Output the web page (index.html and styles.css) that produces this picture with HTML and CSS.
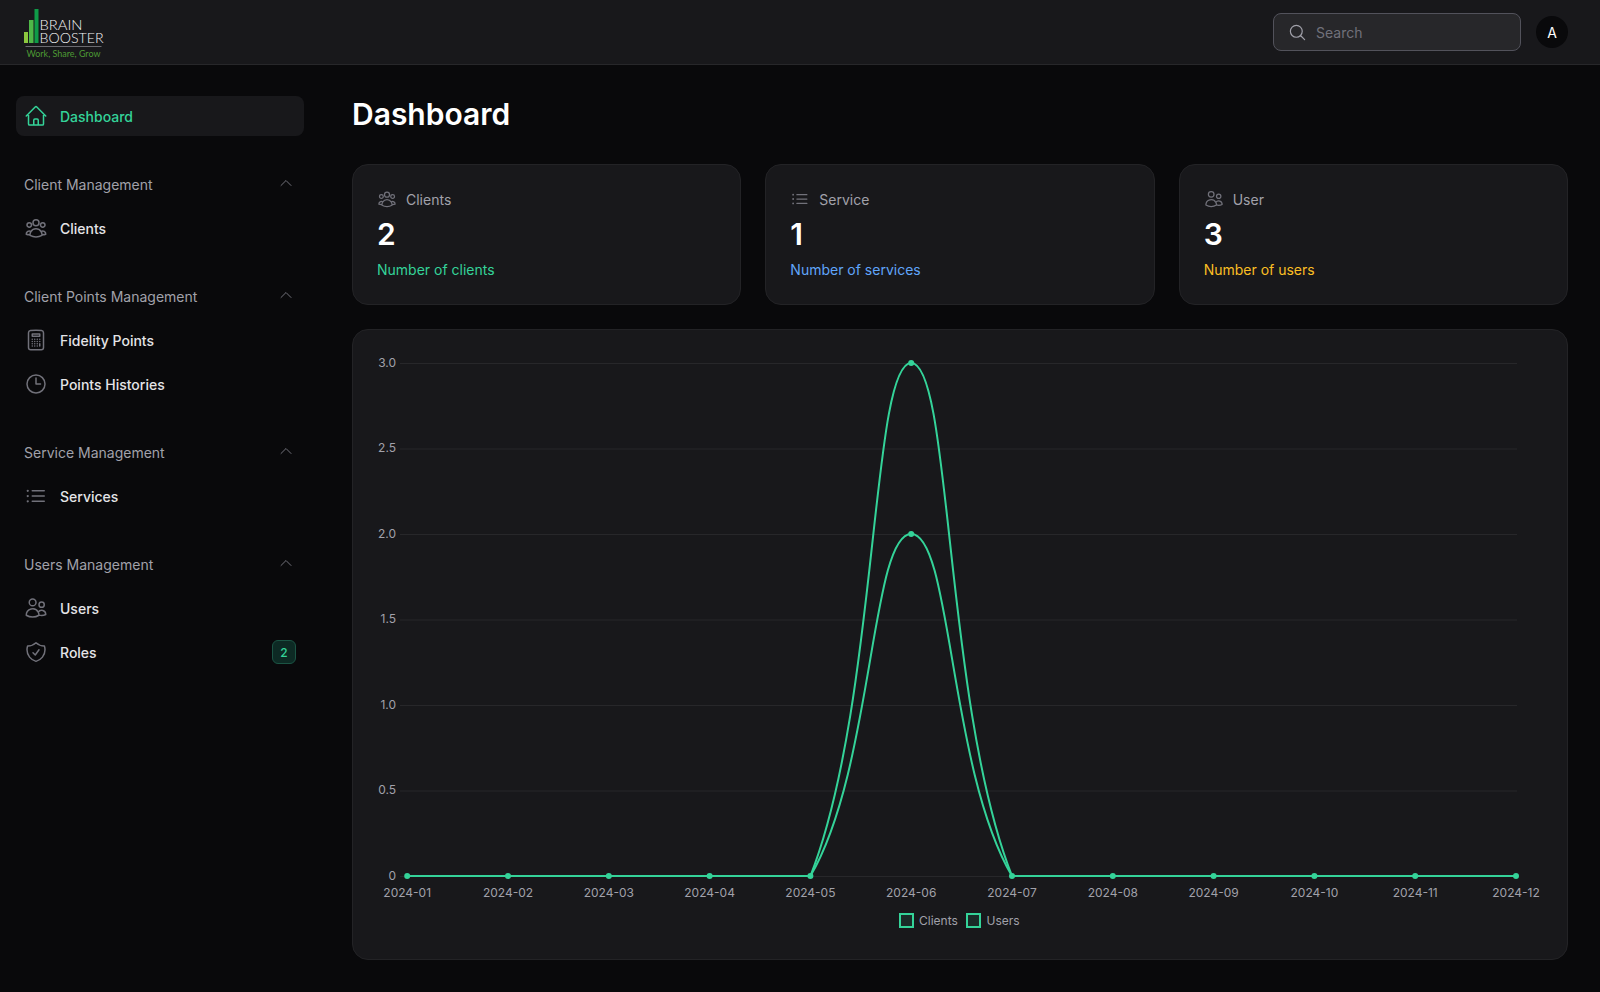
FILE: index.html
```html
<!DOCTYPE html>
<html lang="en">

<head>
	<meta charset="UTF-8" />
	<title>Dashboard</title>
	<link rel="stylesheet" href="styles.css">
</head>

<body>
	<!-- icon set -->
	<svg class="icon-defs">
		<symbol id="i-home" viewBox="0 0 24 24"><path d="m2.25 12 8.954-8.955c.44-.439 1.152-.439 1.591 0L21.75 12M4.5 9.75v10.125c0 .621.504 1.125 1.125 1.125H9.75v-4.875c0-.621.504-1.125 1.125-1.125h2.25c.621 0 1.125.504 1.125 1.125V21h4.125c.621 0 1.125-.504 1.125-1.125V9.75M8.25 21h8.25"/></symbol>
		<symbol id="i-group" viewBox="0 0 24 24"><path d="M18 18.72a9.094 9.094 0 0 0 3.741-.479 3 3 0 0 0-4.682-2.72m.94 3.198.001.031c0 .225-.012.447-.037.666A11.944 11.944 0 0 1 12 21c-2.17 0-4.207-.576-5.963-1.584A6.062 6.062 0 0 1 6 18.719m12 0a5.971 5.971 0 0 0-.941-3.197m0 0A5.995 5.995 0 0 0 12 12.75a5.995 5.995 0 0 0-5.058 2.772m0 0a3 3 0 0 0-4.681 2.72 8.986 8.986 0 0 0 3.74.477m.94-3.197a5.971 5.971 0 0 0-.94 3.197M15 6.75a3 3 0 1 1-6 0 3 3 0 0 1 6 0Zm6 2.25a2.25 2.25 0 1 1-4.5 0 2.25 2.25 0 0 1 4.5 0Zm-13.5 0a2.25 2.25 0 1 1-4.5 0 2.25 2.25 0 0 1 4.5 0Z"/></symbol>
		<symbol id="i-calc" viewBox="0 0 24 24"><path d="M15.75 15.75V18m-7.5-6.75h.008v.008H8.25v-.008Zm0 2.25h.008v.008H8.25V13.5Zm0 2.25h.008v.008H8.25v-.008Zm0 2.25h.008v.008H8.25V18Zm2.498-6.75h.007v.008h-.007v-.008Zm0 2.25h.007v.008h-.007V13.5Zm0 2.25h.007v.008h-.007v-.008Zm0 2.25h.007v.008h-.007V18Zm2.504-6.75h.008v.008h-.008v-.008Zm0 2.25h.008v.008h-.008V13.5Zm0 2.25h.008v.008h-.008v-.008Zm0 2.25h.008v.008h-.008V18Zm2.498-6.75h.008v.008h-.008v-.008Zm0 2.25h.008v.008h-.008V13.5ZM8.25 6h7.5v2.25h-7.5V6ZM12 2.25c-1.892 0-3.758.11-5.593.322C5.307 2.7 4.5 3.65 4.5 4.757V19.5a2.25 2.25 0 0 0 2.25 2.25h10.5a2.25 2.25 0 0 0 2.25-2.25V4.757c0-1.108-.806-2.057-1.907-2.185A48.507 48.507 0 0 0 12 2.25Z"/></symbol>
		<symbol id="i-clock" viewBox="0 0 24 24"><path d="M12 6v6h4.5m4.5 0a9 9 0 1 1-18 0 9 9 0 0 1 18 0Z"/></symbol>
		<symbol id="i-list" viewBox="0 0 24 24"><path d="M8.25 6.75h12M8.25 12h12m-12 5.25h12M3.75 6.75h.007v.008H3.75V6.75Zm.375 0a.375.375 0 1 1-.75 0 .375.375 0 0 1 .75 0ZM3.75 12h.007v.008H3.75V12Zm.375 0a.375.375 0 1 1-.75 0 .375.375 0 0 1 .75 0Zm-.375 5.25h.007v.008H3.75v-.008Zm.375 0a.375.375 0 1 1-.75 0 .375.375 0 0 1 .75 0Z"/></symbol>
		<symbol id="i-users" viewBox="0 0 24 24"><path d="M15 19.128a9.38 9.38 0 0 0 2.625.372 9.337 9.337 0 0 0 4.121-.952 4.125 4.125 0 0 0-7.533-2.493M15 19.128v-.003c0-1.113-.285-2.16-.786-3.07M15 19.128v.106A12.318 12.318 0 0 1 8.624 21c-2.331 0-4.512-.645-6.374-1.766l-.001-.109a6.375 6.375 0 0 1 11.964-3.07M12 6.375a3.375 3.375 0 1 1-6.75 0 3.375 3.375 0 0 1 6.75 0Zm8.25 2.25a2.625 2.625 0 1 1-5.25 0 2.625 2.625 0 0 1 5.25 0Z"/></symbol>
		<symbol id="i-shield" viewBox="0 0 24 24"><path d="M9 12.75 11.25 15 15 9.75m-3-7.036A11.959 11.959 0 0 1 3.598 6 11.99 11.99 0 0 0 3 9.749c0 5.592 3.824 10.29 9 11.623 5.176-1.332 9-6.03 9-11.622 0-1.31-.21-2.571-.598-3.751h-.152c-3.196 0-6.1-1.248-8.25-3.285Z"/></symbol>
		<symbol id="i-chevron" viewBox="0 0 24 24"><path d="m4.5 15.75 7.5-7.5 7.5 7.5"/></symbol>
		<symbol id="i-search" viewBox="0 0 24 24"><path d="m21 21-5.197-5.197m0 0A7.5 7.5 0 1 0 5.196 5.196a7.5 7.5 0 0 0 10.607 10.607Z"/></symbol>
	</svg>

	<header class="topbar">
		<svg class="logo" width="84" height="50" viewBox="0 0 84 50">
			<rect x="0" y="23" width="4" height="11" fill="#8cc63f"/>
			<rect x="5" y="11" width="4.5" height="23" fill="#4fb848"/>
			<rect x="10.5" y="0" width="4" height="34" fill="#0f9b48"/>
			<text class="logo-word" x="15.5" y="21" textLength="43" lengthAdjust="spacingAndGlyphs">BRAIN</text>
			<text class="logo-word" x="15.5" y="33.5" textLength="64" lengthAdjust="spacingAndGlyphs">BOOSTER</text>
			<rect x="1.5" y="37" width="76" height="1" fill="#6b6b70"/>
			<text class="logo-tag" x="2.5" y="48" textLength="74" lengthAdjust="spacingAndGlyphs">Work, Share, Grow</text>
		</svg>
		<div class="topbar-right">
			<div class="search">
				<svg class="ico search-ico"><use href="#i-search"/></svg>
				<span>Search</span>
			</div>
			<div class="avatar">A</div>
		</div>
	</header>

	<div class="layout">
		<aside class="sidebar">
			<a class="nav-item active"><svg class="ico"><use href="#i-home"/></svg>Dashboard</a>

			<div class="nav-group">
				<div class="nav-title">Client Management <svg class="ico chev"><use href="#i-chevron"/></svg></div>
				<a class="nav-item"><svg class="ico"><use href="#i-group"/></svg>Clients</a>
			</div>

			<div class="nav-group">
				<div class="nav-title">Client Points Management <svg class="ico chev"><use href="#i-chevron"/></svg></div>
				<a class="nav-item"><svg class="ico"><use href="#i-calc"/></svg>Fidelity Points</a>
				<a class="nav-item"><svg class="ico"><use href="#i-clock"/></svg>Points Histories</a>
			</div>

			<div class="nav-group">
				<div class="nav-title">Service Management <svg class="ico chev"><use href="#i-chevron"/></svg></div>
				<a class="nav-item"><svg class="ico"><use href="#i-list"/></svg>Services</a>
			</div>

			<div class="nav-group">
				<div class="nav-title">Users Management <svg class="ico chev"><use href="#i-chevron"/></svg></div>
				<a class="nav-item"><svg class="ico"><use href="#i-users"/></svg>Users</a>
				<a class="nav-item"><svg class="ico"><use href="#i-shield"/></svg>Roles<span class="badge">2</span></a>
			</div>
		</aside>

		<main class="content">
			<h1>Dashboard</h1>

			<div class="stats">
				<div class="card stat">
					<div class="stat-head"><svg class="ico"><use href="#i-group"/></svg>Clients</div>
					<div class="stat-value">2</div>
					<div class="stat-desc green">Number of clients</div>
				</div>
				<div class="card stat">
					<div class="stat-head"><svg class="ico"><use href="#i-list"/></svg>Service</div>
					<div class="stat-value">1</div>
					<div class="stat-desc blue">Number of services</div>
				</div>
				<div class="card stat">
					<div class="stat-head"><svg class="ico"><use href="#i-users"/></svg>User</div>
					<div class="stat-value">3</div>
					<div class="stat-desc yellow">Number of users</div>
				</div>
			</div>

			<div class="card chart">
				<!-- group is shifted so the numbers below are page coordinates -->
				<svg width="1214" height="630" viewBox="0 0 1214 630">
					<g transform="translate(-353 -329)">
						<g class="grid">
							<path d="M400 362.5H1517M400 448H1517M400 533.5H1517M400 619H1517M400 704.5H1517M400 790H1517M400 875.5H1517"/>
						</g>
						<g class="tick" text-anchor="end">
							<text x="396" y="366">3.0</text>
							<text x="396" y="451">2.5</text>
							<text x="396" y="537">2.0</text>
							<text x="396" y="622">1.5</text>
							<text x="396" y="708">1.0</text>
							<text x="396" y="793">0.5</text>
							<text x="396" y="879">0</text>
						</g>
						<g class="tick" text-anchor="middle">
							<text x="407.2" y="896">2024-01</text>
							<text x="508" y="896">2024-02</text>
							<text x="608.8" y="896">2024-03</text>
							<text x="709.6" y="896">2024-04</text>
							<text x="810.4" y="896">2024-05</text>
							<text x="911.2" y="896">2024-06</text>
							<text x="1012" y="896">2024-07</text>
							<text x="1112.8" y="896">2024-08</text>
							<text x="1213.6" y="896">2024-09</text>
							<text x="1314.4" y="896">2024-10</text>
							<text x="1415.2" y="896">2024-11</text>
							<text x="1516" y="896">2024-12</text>
						</g>
						<path class="line" d="M407.2 875H810.4C873.3 768.4 870.9 533 911.2 533C951.5 533 949.1 768.4 1012 875H1516"/>
						<path class="line" d="M407.2 875H810.4C878 702.9 870.9 362 911.2 362C951.5 362 944.4 702.9 1012 875H1516"/>
						<g class="dots">
							<circle cx="407.2" cy="875" r="3"/>
							<circle cx="508" cy="875" r="3"/>
							<circle cx="608.8" cy="875" r="3"/>
							<circle cx="709.6" cy="875" r="3"/>
							<circle cx="810.4" cy="875" r="3"/>
							<circle cx="911.2" cy="533" r="3"/>
							<circle cx="911.2" cy="362" r="3"/>
							<circle cx="1012" cy="875" r="3"/>
							<circle cx="1112.8" cy="875" r="3"/>
							<circle cx="1213.6" cy="875" r="3"/>
							<circle cx="1314.4" cy="875" r="3"/>
							<circle cx="1415.2" cy="875" r="3"/>
							<circle cx="1516" cy="875" r="3"/>
						</g>
						<rect class="swatch" x="900" y="913" width="13" height="13"/>
						<text class="tick" x="919" y="924">Clients</text>
						<rect class="swatch" x="967" y="913" width="13" height="13"/>
						<text class="tick" x="986.5" y="924">Users</text>
					</g>
				</svg>
			</div>
		</main>
	</div>
</body>

</html>
```

FILE: styles.css
```css
* { box-sizing: border-box; }

html, body { height: 100%; }

body {
	margin: 0;
	display: flex; flex-direction: column;
	background: #09090b; color: #e4e4e7;
	font-family: Inter, 'Liberation Sans', sans-serif;
	font-size: 14px;
	overflow: hidden;
}

.icon-defs { display: none; }

.ico {
	width: 24px; height: 24px; flex: none;
	fill: none; stroke: #71717a; stroke-width: 1.5;
	stroke-linecap: round; stroke-linejoin: round;
}

/* top bar */
.topbar {
	flex: none; height: 65px;
	display: flex; align-items: center; justify-content: space-between;
	padding: 0 32px 0 24px;
	background: #18181b;
	border-bottom: 1px solid #27272a;
}

.logo { display: block; margin-top: 3px; }
.logo-word { font-family: Lato, sans-serif; font-weight: 300; font-size: 14px; fill: #f4f4f5; }
.logo-tag { font-family: Lato, sans-serif; font-size: 9px; fill: #4d9a34; }

.topbar-right { display: flex; align-items: center; gap: 15px; }

.search {
	width: 248px; height: 38px;
	display: flex; align-items: center; gap: 9px;
	padding-left: 14px;
	background: #27272a; color: #71717a;
	border: 1px solid #52525b; border-radius: 8px;
}
.search-ico { width: 19px; height: 19px; stroke: #a1a1aa; }

.avatar {
	width: 32px; height: 32px; border-radius: 50%;
	display: flex; align-items: center; justify-content: center;
	background: #09090b; color: #fff;
}

/* sidebar */
.layout { flex: 1; display: flex; min-height: 0; }

.sidebar {
	flex: none; width: 320px;
	padding: 31px 16px 16px;
	display: flex; flex-direction: column; gap: 28px;
}

.nav-group { display: flex; flex-direction: column; gap: 4px; }

.nav-title {
	height: 40px;
	display: flex; align-items: center; justify-content: space-between;
	padding: 0 10px 0 8px;
	color: #a1a1aa;
}
.chev { width: 16px; height: 16px; margin-top: -2px; }

.nav-item {
	height: 40px;
	display: flex; align-items: center; gap: 12px;
	padding: 0 8px;
	border-radius: 8px;
	font-weight: 500;
}
.nav-item.active { background: #18181b; color: #34d399; }
.nav-item.active .ico { stroke: #34d399; }

.badge {
	margin-left: auto;
	width: 24px; height: 24px;
	display: flex; align-items: center; justify-content: center;
	border: 1px solid #1b5444; border-radius: 6px;
	background: #0d2a24; color: #34d399;
	font-size: 12px;
}

/* main */
.content {
	flex: 1; min-width: 0;
	padding: 31px 32px 32px;
	display: flex; flex-direction: column;
}

h1 { margin: 0 0 32px; font-size: 30px; line-height: 36px; font-weight: 600; color: #fff; }

.card {
	background: #18181b;
	border: 1px solid #232326;
	border-radius: 16px;
}

.stats { display: grid; grid-template-columns: repeat(3, 1fr); gap: 24px; margin-bottom: 24px; }

.stat { height: 141px; padding: 24px; }

.stat-head {
	height: 20px;
	display: flex; align-items: center; gap: 9px;
	color: #a1a1aa;
}
.stat-head .ico { width: 20px; height: 20px; }

.stat-value { margin-top: 7px; font-size: 30px; line-height: 36px; font-weight: 600; color: #fff; }
.stat-desc { margin-top: 8px; line-height: 20px; }

.green { color: #34d399; }
.blue { color: #60a5fa; }
.yellow { color: #fbbf24; }

/* chart */
.chart { flex: 1; min-height: 0; overflow: hidden; }
.chart svg { display: block; }

.grid path { fill: none; stroke: #27272a; stroke-width: 1; }
.tick, .tick text { font-size: 12px; fill: #a1a1aa; }
.line { fill: none; stroke: #34d399; stroke-width: 2; }
.dots circle { fill: #34d399; }
.swatch { fill: rgba(52, 211, 153, 0.1); stroke: #34d399; stroke-width: 2; }
```
